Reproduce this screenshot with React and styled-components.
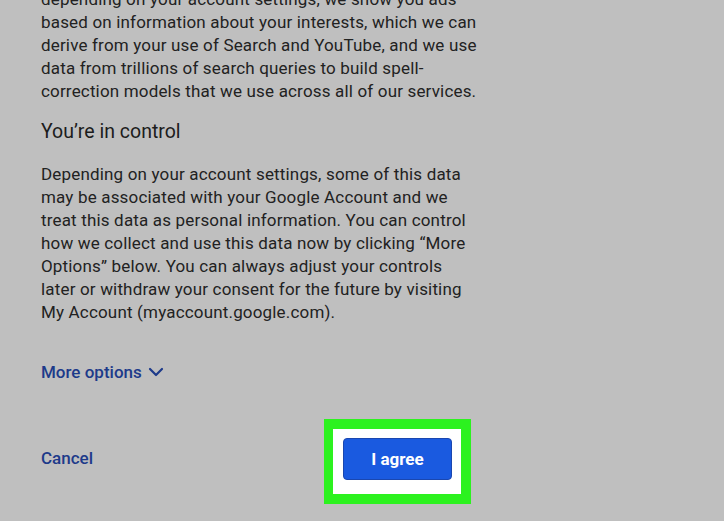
import React from "react";
import styled, { createGlobalStyle } from "styled-components";

const Global = createGlobalStyle`
  html, body { margin: 0; padding: 0; background: #bfbfbf; }
  body { width: 724px; height: 521px; overflow: hidden; font-family: Roboto, "Liberation Sans", sans-serif; }
`;

const Page = styled.div`
  width: 724px;
  height: 521px;
  overflow: hidden;
  background: #bfbfbf;
  padding-left: 41px;
  box-sizing: border-box;
`;

const Column = styled.div`
  width: 430px;
  display: flex;
  flex-direction: column;
  margin-top: -12px;
`;

const Para = styled.p`
  margin: 0;
  font-size: 17px;
  letter-spacing: 0.17px;
  line-height: 23px;
  color: #222222;
  white-space: nowrap;
  margin-top: ${(p) => p.$gap || 0}px;
`;

const Heading = styled.h2`
  margin: 17px 0 0;
  font-size: 19.5px;
  line-height: 24px;
  font-weight: 400;
  color: #1c1c1c;
`;

const LinkButton = styled.button`
  all: unset;
  display: inline-flex;
  align-items: center;
  gap: 6px;
  font-family: Roboto, "Liberation Sans", sans-serif;
  font-size: 17px;
  line-height: 24px;
  font-weight: 500;
  color: #1d3a8a;
  cursor: pointer;
`;

const OptionsRow = styled.div`
  margin-top: 36px;
  display: flex;
`;

const Footer = styled.div`
  margin-top: 35px;
  display: flex;
  justify-content: space-between;
  align-items: center;
`;

const Highlight = styled.div`
  border-style: solid;
  border-color: #2cf21f;
  border-width: 10px 10px 10px 9px;
  background: #ffffff;
  padding: 9px 9px 14px 10px;
`;

const Primary = styled.button`
  all: unset;
  display: flex;
  align-items: center;
  justify-content: center;
  width: 109px;
  height: 42px;
  box-sizing: border-box;
  border-radius: 4px;
  background: #1a5ae0;
  border: 1px solid #1a47b0;
  color: #ffffff;
  font-family: Roboto, "Liberation Sans", sans-serif;
  font-size: 17px;
  font-weight: 700;
`;

const CancelWrap = styled.div`
  margin-top: -7px;
`;

export default function App() {
  return (
    <Page>
      <Global />
      <Column>
        <Para>
          depending on your account settings, we show you ads<br />
          based on information about your interests, which we can<br />
          derive from your use of Search and YouTube, and we use<br />
          data from trillions of search queries to build spell-<br />
          correction models that we use across all of our services.
        </Para>
        <Heading>You’re in control</Heading>
        <Para $gap={19}>
          Depending on your account settings, some of this data<br />
          may be associated with your Google Account and we<br />
          treat this data as personal information. You can control<br />
          how we collect and use this data now by clicking “More<br />
          Options” below. You can always adjust your controls<br />
          later or withdraw your consent for the future by visiting<br />
          My Account (myaccount.google.com).
        </Para>
        <OptionsRow>
          <LinkButton>
            More options
            <svg width="16" height="10" viewBox="0 0 16 10" fill="none">
              <path d="M2 2l6 6 6-6" stroke="#1d3a8a" strokeWidth="2.2" strokeLinecap="round" strokeLinejoin="round" />
            </svg>
          </LinkButton>
        </OptionsRow>
        <Footer>
          <CancelWrap>
            <LinkButton>Cancel</LinkButton>
          </CancelWrap>
          <Highlight>
            <Primary>I agree</Primary>
          </Highlight>
        </Footer>
      </Column>
    </Page>
  );
}
